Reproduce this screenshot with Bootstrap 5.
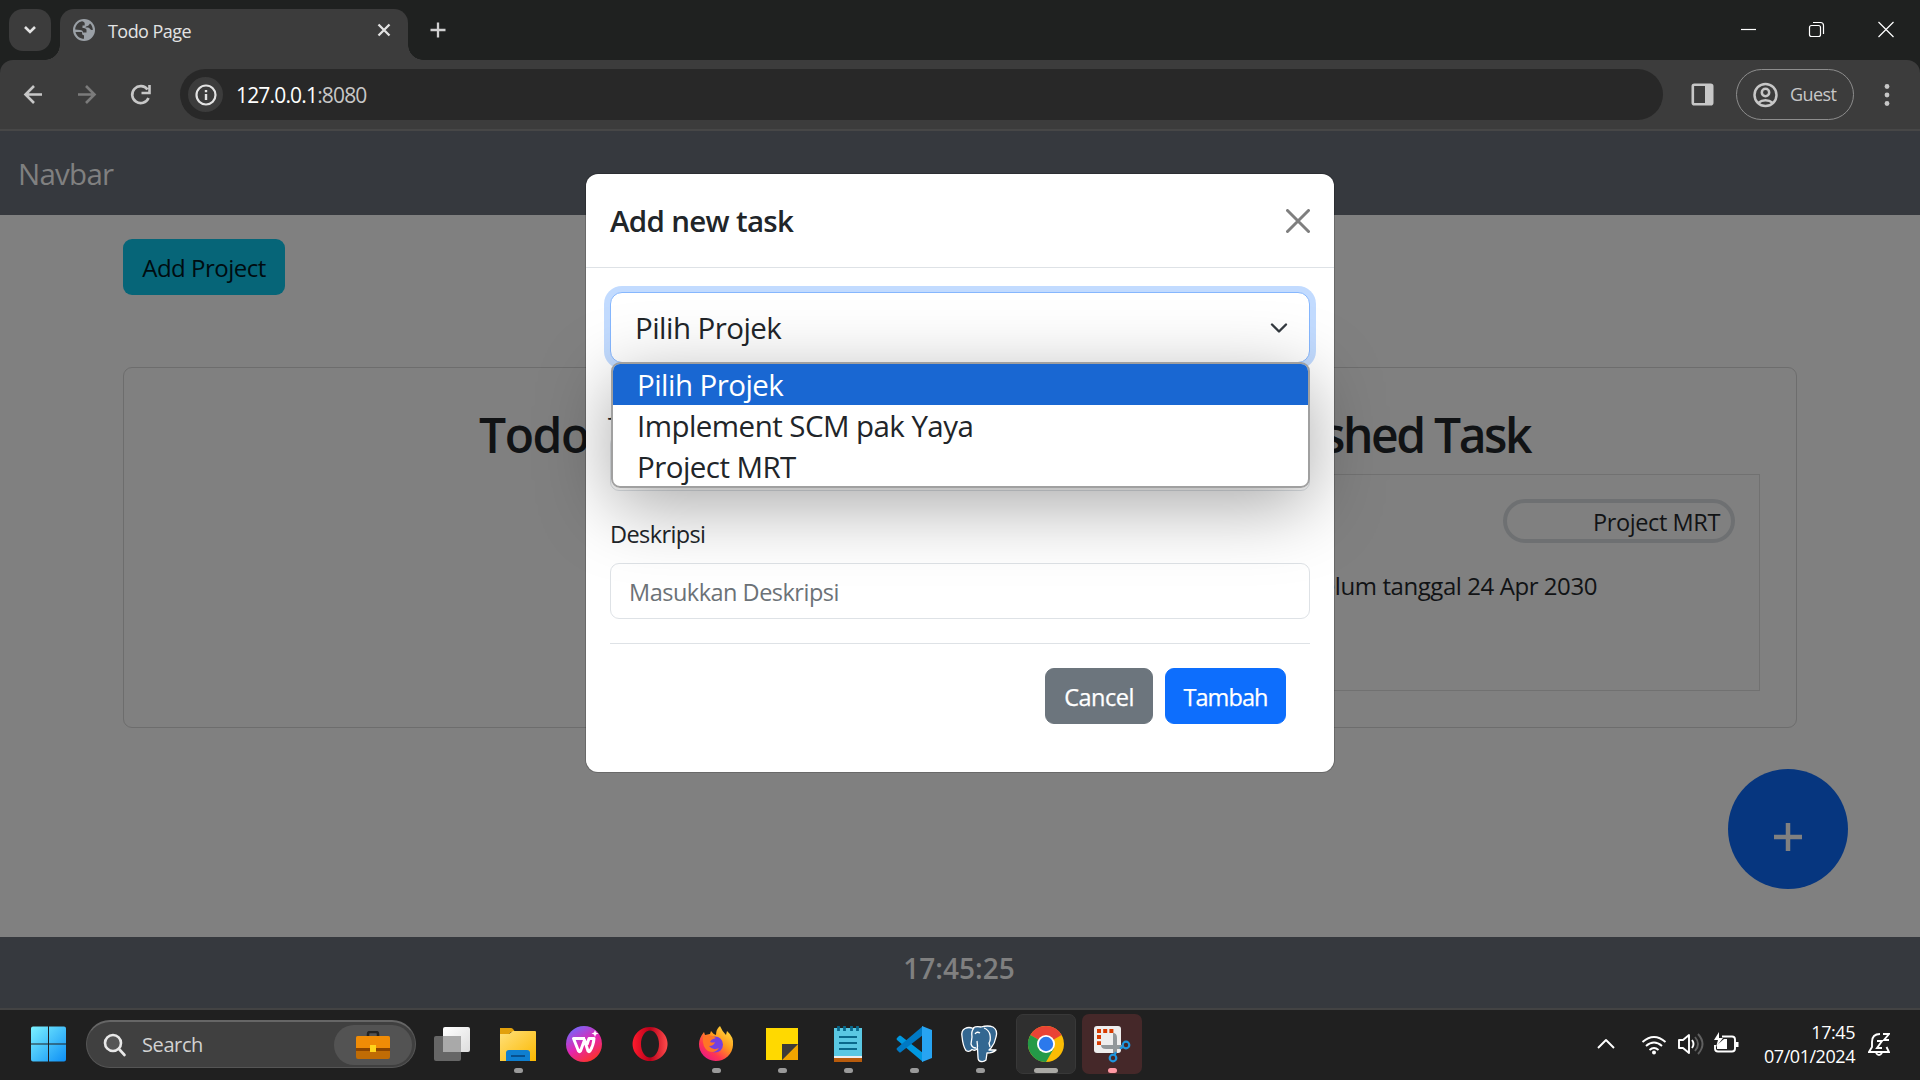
<!DOCTYPE html>
<html lang="id">
<head>
<meta charset="utf-8">
<meta name="viewport" content="width=device-width, initial-scale=1">
<title>Todo Page</title>
<link href="https://cdn.jsdelivr.net/npm/bootstrap@5.3.0/dist/css/bootstrap.min.css" rel="stylesheet">
<style>
body{width:1920px;height:1080px;overflow:hidden;background:#202020;font-family:"Open Sans","Noto Sans",sans-serif;font-size:24px;line-height:1.5}
svg{display:block;flex:none}
.desk{width:1920px;height:1080px}
/* browser chrome */
.tabstrip{height:60px;background:#1f2120;padding-left:9px}
.tab-search{width:42px;height:42px;border-radius:14px;background:#3c3c3c;margin-top:9px}
.tab-active{width:348px;height:51px;margin:9px 0 0 9px;background:#3c3c3c;border-radius:14px 14px 0 0;padding:0 16px 0 13px;position:relative}
.tab-active:before,.tab-active:after{content:"";position:absolute;bottom:0;width:15px;height:15px}
.tab-active:before{left:-15px;background:radial-gradient(circle at 0 0,transparent 14.5px,#3c3c3c 15px)}
.tab-active:after{right:-15px;background:radial-gradient(circle at 100% 0,transparent 14.5px,#3c3c3c 15px)}
.tab-label{font-size:18px;line-height:24px;color:#e3e3e3;letter-spacing:-.55px;margin:0 0 7px 13px}
.toolbar-wrap{background:#1f2120}
.toolbar{height:71px;background:#3c3c3c;border-bottom:2px solid #474747;border-radius:13px 13px 0 0}
.omnibox{width:1483px;height:51px;border-radius:26px;background:#282828;padding-left:8px;margin-left:29px}
.site-info{width:35px;height:35px;border-radius:50%;background:#3c3c3c}
.address{font-size:21px;line-height:28px;color:#c7c7c7;letter-spacing:-.83px;margin-left:13px}
.address b{font-weight:400;color:#fff}
.guest{width:118px;height:51px;border:1px solid #8d8d8d;border-radius:26px;color:#c7c7c7;font-size:18px;letter-spacing:-.6px;padding-left:16px}
/* page */
.page{height:877px;background:#808080;position:relative;color:#111315}
.top-nav{height:84px;background:#36393e;padding:2px 18px 0}
.top-nav .navbar-brand{font-size:29.5px;color:#808080;letter-spacing:-.75px}
.page-body{padding:24px 123px 0}
.btn-project{height:56px;width:162px;background:#066578;border-radius:9px;color:#000c10;font-size:24px;letter-spacing:-.5px;line-height:1;padding:2px 0 0}
.board{height:361px;margin-top:72px;border:1px solid #6d6d6d;border-radius:9px;background:transparent;padding:38px 36px 36px}
.board h2{font-size:48px;font-weight:600;line-height:58px;letter-spacing:-1.4px;margin:0 0 10px}
.col-todo{width:799px;padding-left:319px}
.col-done{width:801px}
.col-done h2{padding-left:60px;letter-spacing:-2.4px}
.task-box{height:217px;border:1px solid #717171;padding:24px}
.pill{width:232px;height:44px;border:4px solid #6e7072;border-radius:22px;padding-right:11px;font-size:23.5px;letter-spacing:-.4px;line-height:39px}
.due{font-size:24px;line-height:36px;letter-spacing:-.43px;margin:25px 138px 0 0}
.fab{width:120px;height:120px;border-radius:50%;background:#06367f;position:absolute;left:1728px;top:638px}
.foot{height:71px;background:#36393e;position:absolute;left:0;right:0;bottom:0;color:#808080;font-size:28px;font-weight:600;line-height:63px;padding-right:2px}
/* dialog */
.dialog-box{position:absolute;left:586px;top:43px;width:748px;height:598px;background:#fff;border-radius:12px;color:#212529;box-shadow:0 0 0 1px rgba(0,0,0,.18)}
.dialog-head{height:94px;border-bottom:1px solid #dee2e6;padding:0 24px}
.dialog-head h5{font-size:29.5px;font-weight:600;letter-spacing:-.68px;margin:0;color:#212529}
.dialog-body{padding:24px}
.dialog-box .form-select{height:71px;border:1px solid #86b7fe;box-shadow:0 0 0 6px #c2dbff;border-radius:12px;padding:1px 21px 0 24px;background:#fff;font-size:29.5px;letter-spacing:-.55px;color:#212529}
.field{margin-top:24px}
.dialog-box .form-label{font-size:23.5px;line-height:36px;letter-spacing:-.6px;margin:0 0 11px;padding-top:1px}
.dialog-box .form-control{height:56px;border:1px solid #dee2e6;border-radius:9px;padding:1px 18px 0;font-size:23.5px;letter-spacing:-.5px}
.dialog-box .form-control::placeholder{color:#6c7277}
.dialog-foot{margin-top:24px;border-top:1px solid #dee2e6;padding:24px 24px 0;gap:12px}
.dialog-foot .btn{height:56px;border-radius:9px;font-size:23.5px;line-height:1;padding:3px 0 0;letter-spacing:-.5px;-webkit-text-stroke:.25px #fff}
.btn-cancel{width:108px}.dialog-foot .btn-send{width:121px;letter-spacing:-.9px}
.options{position:absolute;left:25px;top:188px;width:699px;height:126px;border:2px solid #a0a0a0;border-radius:9px;background:#fff;overflow:hidden;font-size:29.5px;line-height:41px;letter-spacing:-.55px;color:#212529;z-index:3}
.options div{height:41px;padding-left:24px}
.options .chosen{background:#1967d2;color:#fff}
.options-shade{position:absolute;left:25px;top:188px;width:699px;height:126px;border-radius:9px;box-shadow:0 18px 72px rgba(0,0,0,.34);z-index:2}
/* taskbar */
.taskbar{height:72px;background:#202020;border-top:2px solid #434343;padding:0 0 2px 19px;position:relative}
.find{width:330px;height:48px;border-radius:24px;background:#404040;border:1px solid #555;border-top:2px solid #666;margin-left:7px;padding:0 3px 0 16px;color:#d2d2d2;font-size:20px;letter-spacing:-.4px}
.find-extra{width:78px;height:40px;border-radius:20px;background:#535353}
.apps{margin-left:6px;gap:6px}
.app{width:60px;height:60px;border-radius:7px;position:relative}
.app.run:after{content:"";position:absolute;bottom:1px;left:25.5px;width:9px;height:5px;border-radius:3px;background:#9a9a9a}
.app.front{background:#2f2f2f;border:1px solid #383838}
.app.front:after{left:17px;width:24px;bottom:0;background:#aaa9a5}
.app.alert-app{background:#452829}
.app.alert-app:after{background:#ff99a4}
.tray{margin-left:auto;padding-right:30px;color:#fff}
.clock{font-size:18px;line-height:24px;letter-spacing:-.45px;width:102px;margin:0 0 1px 11px}
</style>
</head>
<body>
<div class="desk d-flex flex-column">
 <header>
  <div class="tabstrip d-flex">
   <div class="tab-search d-flex align-items-center justify-content-center"><svg width="16" height="12" viewBox="0 0 16 12"><path d="M3 3l5 5 5-5" fill="none" stroke="#e3e3e3" stroke-width="2.6"/></svg></div>
   <div class="tab-active d-flex align-items-center">
    <svg width="22" height="22" viewBox="0 0 22 22" style="margin-bottom:9px"><circle cx="11" cy="11" r="11" fill="#9aa0a6"/><path d="M9 2.200C5 3 2.300 6.500 2.200 10.500L7 11c2 .2 3 1 3 2.500h3.500V11c0-1.500-2-2-4-2V6.500h2.200V4.500c0-1.500-1.500-2-2.700-2.300M2.500 13c1 4 4.500 6.800 8.500 6.800v-3.500c-2 0-2-2-2-3.300zM17 4.500l-1.500 2c-1 1-3 .5-3 2h2.500c2 0 2 2.500 3.500 2.500h1.300c0-2.500-1-5-2.800-6.500" fill="#3c3c3c"/></svg>
    <span class="tab-label">Todo Page</span>
    <svg class="ms-auto" style="margin-bottom:9px" width="16" height="16" viewBox="0 0 16 16"><path d="M2.500 2.500l11 11m0-11l-11 11" stroke="#e3e3e3" stroke-width="2.300"/></svg>
   </div>
   <svg style="margin:21px 0 0 21px" width="18" height="18" viewBox="0 0 18 18"><path d="M9 1.500v15M1.500 9h15" stroke="#d0d0d0" stroke-width="2.300"/></svg>
   <div class="ms-auto d-flex align-items-center">
    <svg width="180" height="60" viewBox="0 0 180 60" fill="none" stroke="#fff" stroke-width="1.200"><path d="M1 29.500h15"/><rect x="69.500" y="25.500" width="11" height="11" rx="2"/><path d="M73 22.500h7.500q3 0 3 3V34M138.500 22l15 15m0-15l-15 15"/></svg>
   </div>
  </div>
  <div class="toolbar-wrap"><div class="toolbar d-flex align-items-center">
   <svg width="151" height="69" viewBox="0 0 151 69" fill="none" stroke="#c7c7c7" stroke-width="2.600"><path d="M42 34.500H26M34 26l-8.500 8.500L34 43"/><path stroke="#7b7b7b" d="M78 34.500h16M86 26l8.500 8.500L86 43"/><path d="M148.500 38a8.500 8.500 0 1 1-1-8.500M149.500 25v8h-8"/></svg>
   <div class="omnibox d-flex align-items-center"><span class="site-info d-flex align-items-center justify-content-center"><svg width="22" height="22" viewBox="0 0 22 22"><circle cx="11" cy="11" r="9.500" fill="none" stroke="#e3e3e3" stroke-width="2.200"/><path d="M11 10v6M11 6v2.300" stroke="#e3e3e3" stroke-width="2.400"/></svg></span><span class="address"><b>127.0.0.1</b>:8080</span></div>
   <svg style="margin-left:28px" width="23" height="23" viewBox="0 0 23 23"><rect x="1.800" y="1.800" width="19.400" height="19.400" rx="1.500" fill="none" stroke="#c7c7c7" stroke-width="2.600"/><path d="M14 1h7v21h-7z" fill="#c7c7c7"/></svg>
   <div class="guest d-flex align-items-center" style="margin-left:22px"><svg width="25" height="26" viewBox="0.500 0 25 26" fill="none" stroke="#c7c7c7" stroke-width="2.500"><circle cx="13" cy="13" r="11"/><circle cx="13" cy="10.500" r="3.700"/><path d="M5.500 21q7.500-5.500 15 0"/></svg><span class="ms-2 ps-1">Guest</span></div>
   <svg style="margin-left:30px" width="6" height="24" viewBox="0 0 6 24" fill="#c7c7c7"><circle cx="3" cy="3.500" r="2.400"/><circle cx="3" cy="12" r="2.400"/><circle cx="3" cy="20.500" r="2.400"/></svg>
  </div></div>
 </header>
 <main class="page">
  <nav class="top-nav navbar"><span class="navbar-brand p-0 m-0">Navbar</span></nav>
  <div class="page-body">
   <button class="btn btn-project d-block">Add Project</button>
   <div class="board card flex-row justify-content-between">
    <section class="col-todo"><h2>Todo</h2></section>
    <section class="col-done"><h2 class="text-center">Finished Task</h2>
     <div class="task-box d-flex flex-column align-items-end"><div class="pill text-end">Project MRT</div><p class="due">Selesai sebelum tanggal 24 Apr 2030</p></div>
    </section>
   </div>
  </div>
  <div class="fab"><svg width="120" height="120" viewBox="0 0 120 120"><path d="M60 54v28M46 68h28" stroke="#808080" stroke-width="4.500"/></svg></div>
  <footer class="foot text-center">17:45:25</footer>
  <div class="dialog-box" role="dialog">
   <div class="dialog-head d-flex align-items-center justify-content-between"><h5>Add new task</h5><svg width="24" height="24" viewBox="0 0 24 24"><path d="M1.500 1.500l21 21m0-21l-21 21" stroke="#7f7f7f" stroke-width="3" stroke-linecap="round"/></svg></div>
   <div class="dialog-body">
    <div class="form-select d-flex align-items-center justify-content-between"><span>Pilih Projek</span><svg width="18" height="12" viewBox="0 0 18 12"><path d="M2 2.500l7 7 7-7" fill="none" stroke="#343a40" stroke-width="2.400" stroke-linecap="round" stroke-linejoin="round"/></svg></div>
    <div class="field"><label class="form-label d-block">Judul</label><input class="form-control"></div>
    <div class="field"><label class="form-label d-block">Deskripsi</label><input class="form-control" placeholder="Masukkan Deskripsi"></div>
    <div class="dialog-foot d-flex justify-content-end"><button class="btn btn-secondary btn-cancel">Cancel</button><button class="btn btn-primary btn-send">Tambah</button></div>
   </div>
   <div class="options-shade"></div>
   <div class="options"><div class="chosen">Pilih Projek</div><div>Implement SCM pak Yaya</div><div>Project MRT</div></div>
  </div>
 </main>
 <footer class="taskbar d-flex align-items-center">
  <svg width="60" height="60" viewBox="-12 -12.500 60 60"><defs><linearGradient id="win" x1="0" y1="0" x2="36" y2="36" gradientUnits="userSpaceOnUse"><stop stop-color="#7cf2ff"/><stop offset="1" stop-color="#0a8cf5"/></linearGradient></defs><path fill="url(#win)" d="M2 0h15v17H0V2q0-2 2-2M18 0h15q2 0 2 2v15H18zM0 18h17v17H2q-2 0-2-2zM18 18h17v15q0 2-2 2H18z"/></svg>
  <div class="find d-flex align-items-center"><svg width="24" height="24" viewBox="0 0 24 24" fill="none" stroke="#e8e8e8" stroke-width="2.600" stroke-linecap="round"><circle cx="10" cy="10" r="8" fill="#555"/><path d="M16 16l5.500 6"/></svg><span style="margin-left:15px">Search</span>
   <span class="find-extra ms-auto d-flex align-items-center justify-content-center"><svg width="34" height="28" viewBox="0 0 34 28"><path d="M12 6V3q0-2 2-2h6q2 0 2 2v3" fill="none" stroke="#222" stroke-width="2.500"/><rect y="5" width="34" height="23" rx="2" fill="#c06c05"/><path d="M0 17V7q0-2 2-2h30q2 0 2 2v10z" fill="#f08c06"/><path d="M0 17h34v3H0z" fill="#8b4500"/><rect x="14" y="14" width="6" height="7" fill="#ffd51c"/></svg></span></div>
  <div class="apps d-flex">
   <div class="app"><svg width="60" height="60" viewBox="0 0 60 60"><defs><linearGradient id="tv" x2="1" y2="1"><stop stop-color="#fff"/><stop offset="1" stop-color="#ddd"/></linearGradient></defs><rect x="12" y="22" width="27" height="25" rx="2" fill="#666"/><rect x="21" y="13" width="27" height="25" rx="2" fill="url(#tv)"/><path d="M21 22h18v16H21z" fill="#a9a9a9"/></svg></div>
   <div class="app run"><svg width="60" height="60" viewBox="0 0 60 60"><defs><linearGradient id="fo" x2="1" y2="1"><stop stop-color="#ffe07a"/><stop offset="1" stop-color="#fbb800"/></linearGradient></defs><path d="M12 14h11q2 0 4 4h-4l-3 3h-8z" fill="#e2a00c"/><path d="M12 20h9l4-3h22q1 0 1 1v29H12z" fill="url(#fo)"/><path d="M18 47V39q0-3 3-3h18q3 0 3 3v8z" fill="#0f7fd0"/><path d="M23 42h14" stroke="#07508e" stroke-width="2"/></svg></div>
   <div class="app"><svg width="60" height="60" viewBox="0 0 60 60"><defs><linearGradient id="wp" x1=".2" y1="0" x2=".8" y2="1"><stop stop-color="#6f6bff"/><stop offset=".5" stop-color="#e325b0"/><stop offset="1" stop-color="#ff3418"/></linearGradient></defs><circle cx="30" cy="30" r="18" fill="url(#wp)"/><path d="M31 24.500H19.500l5 12.500q1 1.500 2 0l4-11 3.500 11q1 1.500 2 0 3.500-5.500 4-12.500h-5l-2 6" fill="none" stroke="#fff" stroke-width="3" stroke-linejoin="round"/><path d="M41 16l1 2.500 2.500 1-2.500 1-1 2.500-1-2.500-2.500-1 2.500-1z" fill="#fff"/></svg></div>
   <div class="app"><svg width="60" height="60" viewBox="0 0 60 60"><defs><linearGradient id="op" x2="1"><stop stop-color="#ff1b2d"/><stop offset=".5" stop-color="#b8001a"/><stop offset="1" stop-color="#ff4b4b"/></linearGradient></defs><path fill="url(#op)" fill-rule="evenodd" d="M30 13a17.500 17 0 1 0 .1 0zM30 16.500c5 0 9 6 9 13.500s-4 13.500-9 13.500-9-6-9-13.500 4-13.500 9-13.500"/></svg></div>
   <div class="app run"><svg width="60" height="60" viewBox="0 0 60 60"><defs><linearGradient id="ff" x1="1" y1="0" x2=".2" y2="1"><stop stop-color="#fff04a"/><stop offset=".45" stop-color="#ff9a1c"/><stop offset=".75" stop-color="#ff3650"/><stop offset="1" stop-color="#e5158c"/></linearGradient></defs><path fill="url(#ff)" d="M34 12q2 5 6 9l1-4q7 6 6 14a17 16.500 0 0 1-34-1q0-6 5-12l1 3 5-1 1-3q2 3 5 4 0-6 4-9"/><circle cx="29" cy="30.500" r="8" fill="#7440df"/><path d="M17 23q7-4 13 1-5 1-6 4 3 1 5 0-1 4-6 4 4 5 10 2-4 6-11 3-6-4-5-14" fill="#ff7526"/></svg></div>
   <div class="app run"><svg width="60" height="60" viewBox="0 0 60 60"><path d="M14 14h32v16L30 46H14z" fill="#ffd900"/><path d="M30 46h16V30z" fill="#f0a400"/><path d="M30 30h16L30 46z" fill="#3d3b38"/></svg></div>
   <div class="app run"><svg width="60" height="60" viewBox="0 0 60 60"><path d="M16 41h28v7H16z" fill="#b85b0b"/><path d="M16 40h28v4H16z" fill="#eee"/><rect x="16" y="14" width="28" height="28" fill="#5ac8e3"/><path d="M21 23h18M21 29h18M21 35h18" stroke="#09698c" stroke-width="2"/><path d="M20.500 12v5M26.500 12v5M33.500 12v5M39.500 12v5" stroke="#09698c" stroke-width="2.800"/></svg></div>
   <div class="app run"><svg width="60" height="60" viewBox="0 0 60 60"><path d="M13 24l2-2q1-1 2 0l22 17v9L13 26q-1-1 0-2" fill="#0098e0"/><path d="M13 36l2 2q1 1 2 0l22-17v-9L13 34q-1 1 0 2" fill="#0079c4"/><path d="M38 12l10 4v28l-10 4z" fill="#27a4f2"/></svg></div>
   <div class="app run"><svg width="60" height="60" viewBox="0 0 60 60" fill="#336791" stroke="#fff" stroke-width="1.300" stroke-linejoin="round"><path d="M23 14q3-2 8-1 7-2 12 0 5 3 3 10-1 6-5 11l-2 2h7q-3 3-9 3l-1 7q-2 2-5 1.500-3-.5-3-4l-.5-9q-2 3-5.500 1-3 3-6 1-3-4-4-14-1-6 3-8 4-2 8 0"/><path d="M24 14q-3 3-2 9l-1 7q1 4 5 4M34 14q5 2 6 7 1 5-1 8l1 4M25 20q2-3 5-1M27 36q1-4 0-9" fill="none"/></svg></div>
   <div class="app run front"><svg width="58" height="58" viewBox="1 1 58 58"><circle cx="30" cy="30" r="18" fill="#fbbc04"/><path d="M30 30L14.400 21a18 18 0 0 1 31.200 0z" fill="#ea4335"/><path d="M30 30l-15.600-9A18 18 0 0 0 30 48l7.800-13.500z" fill="#249a48"/><circle cx="30" cy="30" r="9" fill="#fff"/><circle cx="30" cy="30" r="7.200" fill="#2c79ec"/></svg></div>
   <div class="app run alert-app"><svg width="60" height="60" viewBox="0 0 60 60"><rect x="12" y="12" width="27" height="27" rx="3" fill="#eee"/><path d="M15 17h16.500M17 21v10" stroke="#d83b01" stroke-width="4" stroke-dasharray="4 2.200"/><path d="M31 19q4 0 4 5v15h-4zM19 31h21v4H24q-5 0-5-4" fill="#92989b"/><g fill="none" stroke="#1e96df" stroke-width="2.200"><circle cx="44" cy="31" r="3.300"/><circle cx="31" cy="44" r="3.300"/><path d="M38 34.500l3-1.500M34 38l-1.500 3"/></g></svg></div>
  </div>
  <div class="tray d-flex align-items-center">
   <svg width="150" height="60" viewBox="-1 0 150 60" fill="none" stroke="#fff" stroke-width="1.900"><path d="M5 34l8-8 8 8" stroke-linejoin="round"/>
    <g transform="translate(-2)"><path d="M51.500 28q11.500-10 23 0M55 32q8-7 16 0M58.500 36q4.500-4 9 0"/><circle cx="63" cy="38.500" r="2" fill="#fff" stroke="none"/>
    <path d="M88 26h4l6-5v18l-6-5h-4z" stroke-linejoin="round"/><path d="M101 26q3 4 0 8"/><path d="M104 23q6 7 0 14M107 20q9 10 0 20" stroke="#606060"/>
    <path d="M131 22.500h10q3 0 3 3v9q0 3-3 3h-14q-3 0-3-3V31"/><path d="M146 28v5" stroke-width="3"/><path d="M126 35v-4l7-6h3v10z" fill="#fff" stroke="none"/><path d="M128 18l-5 8h4l-2 7 7-9h-4z" fill="#fff" stroke="none"/></g></svg>
   <div class="clock text-end">17:45<br>07/01/2024</div>
   <svg style="margin:0 0 1px 13px" width="22" height="26" viewBox="0 0 22 26" fill="none" stroke="#fff" stroke-width="1.900"><path d="M12 3Q4 3 4 11v5l-3 5h20l-2.500-5M8 22q3 4 6 0"/><path d="M9 10h5l-5 7h5M15 3h6l-5 6h5"/></svg>
  </div>
 </footer>
</div>
<script src="https://cdn.jsdelivr.net/npm/bootstrap@5.3.0/dist/js/bootstrap.bundle.min.js"></script>
</body>
</html>
